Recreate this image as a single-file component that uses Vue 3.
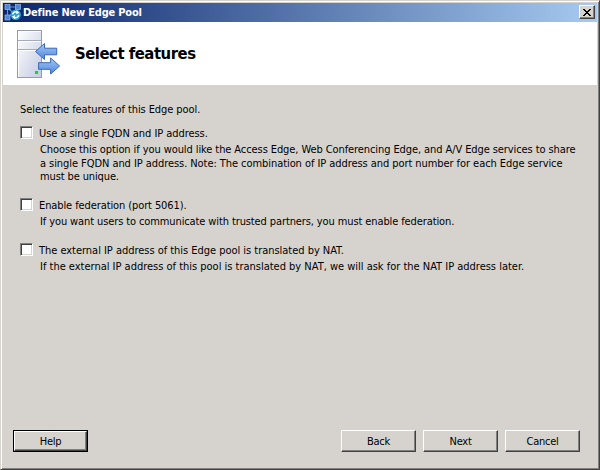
<script setup>
import { ref } from 'vue'

const options = ref([
  {
    id: 'single',
    label: 'Use a single FQDN and IP address.',
    tracking: -0.06,
    lines: [
      { text: 'Choose this option if you would like the Access Edge, Web Conferencing Edge, and A/V Edge services to share', tracking: -0.09 },
      { text: 'a single FQDN and IP address. Note: The combination of IP address and port number for each Edge service', tracking: -0.065 },
      { text: 'must be unique.', tracking: -0.12 },
    ],
    checked: false,
  },
  {
    id: 'federation',
    label: 'Enable federation (port 5061).',
    tracking: -0.1,
    lines: [
      { text: 'If you want users to communicate with trusted partners, you must enable federation.', tracking: -0.11 },
    ],
    checked: false,
  },
  {
    id: 'nat',
    label: 'The external IP address of this Edge pool is translated by NAT.',
    tracking: -0.03,
    lines: [
      { text: 'If the external IP address of this pool is translated by NAT, we will ask for the NAT IP address later.', tracking: -0.01 },
    ],
    checked: false,
  },
])
</script>

<template>
  <div class="window">
    <header class="titlebar">
      <svg class="app-icon" width="17" height="17" viewBox="0 0 17 17">
        <path d="M3.5 3L14 3M3.5 3L9 9L3.5 13.5M14 3L9 9M3.5 3V13" stroke="#5f92d6" stroke-width="1.2" fill="none" />
        <g fill="#4f86d0" stroke="#8fbcf0" stroke-width=".7">
          <rect x="1" y=".6" width="5" height="5" />
          <rect x="11.4" y=".6" width="5" height="5" />
          <rect x="1" y="11" width="5" height="5" />
        </g>
        <circle cx="11.7" cy="10.8" r="5.2" fill="#22a3dc" />
        <path d="M8.7 10.4A3.1 3.1 0 0 1 13.4 8.2M14.7 11A3.1 3.1 0 0 1 10 13.2" stroke="#fff" stroke-width="1.6" fill="none" />
        <path d="M12.5 6.2l3 2.5-3.2 1.6zM10.9 15.2l-3-2.5 3.2-1.6z" fill="#fff" />
      </svg>
      <span class="title">Define New Edge Pool</span>
      <button class="close" aria-label="Close">
        <svg width="8" height="7" viewBox="0 0 8 7" shape-rendering="crispEdges">
          <path d="M0 0h2v1h1v1h2v-1h1v-1h2v1h-1v1h-1v1h-1v1h1v1h1v1h1v1h-2v-1h-1v-1h-2v1h-1v1h-2v-1h1v-1h1v-1h1v-1h-1v-1h-1v-1h-1z" fill="#000" />
        </svg>
      </button>
    </header>

    <section class="banner">
      <svg class="server" width="46" height="50" viewBox="0 0 46 50">
        <defs>
          <linearGradient id="body" x1="0" y1="0" x2="1" y2="1">
            <stop offset="0" stop-color="#fff" />
            <stop offset="1" stop-color="#c4cbe2" />
          </linearGradient>
          <linearGradient id="arrow" x1="0" y1="0" x2="0" y2="1">
            <stop offset="0" stop-color="#a3c8fa" />
            <stop offset="1" stop-color="#4f86da" />
          </linearGradient>
        </defs>
        <rect x="1.5" y="1.5" width="24" height="47" fill="url(#body)" stroke="#949cab" />
        <path d="M2.5 47.5V2.5H24.5" fill="none" stroke="#fff" />
        <path d="M2 11.5H25M2 20.5H25" stroke="#a3aabb" />
        <path d="M2 12.5H25M2 21.5H25" stroke="#fff" />
        <rect x="19" y="42" width="3" height="3" fill="#10d826" />
        <path d="M19.5 22.5L28.5 14.5V19.2H40.7V25.8H28.5V30.5Z" fill="url(#arrow)" stroke="#3b68b4" />
        <path d="M43.6 37L34.6 29V33.7H22.6V40.3H34.6V45Z" fill="url(#arrow)" stroke="#3b68b4" />
      </svg>
      <h1>Select features</h1>
    </section>

    <main class="content">
      <p class="intro">Select the features of this Edge pool.</p>
      <div v-for="o in options" :key="o.id" class="option">
        <label class="row">
          <input v-model="o.checked" type="checkbox" class="box" />
          <span class="label" :style="{ letterSpacing: o.tracking + 'px' }">{{ o.label }}</span>
        </label>
        <div class="desc">
          <div v-for="line in o.lines" :key="line.text" :style="{ letterSpacing: line.tracking + 'px' }">{{ line.text }}</div>
        </div>
      </div>
    </main>

    <footer class="footer">
      <div class="default-frame"><button class="btn">Help</button></div>
      <span class="spacer"></span>
      <button class="btn">Back</button>
      <button class="btn">Next</button>
      <button class="btn">Cancel</button>
    </footer>
  </div>
</template>

<style>
body {
  margin: 0;
  background: #d6d3ce;
}
</style>

<style scoped>
.window {
  box-sizing: border-box;
  width: 600px;
  height: 470px;
  display: flex;
  flex-direction: column;
  background: #d6d3ce;
  border: 1px solid #d6d3ce;
  border-right: 1px solid #404040;
  border-bottom: 1px solid #404040;
  box-shadow: inset 1px 1px #fff, inset -1px -1px #808080;
  padding: 2px;
  color: #000;
  font-family: 'DejaVu Sans Condensed', 'DejaVu Sans', sans-serif;
  font-stretch: condensed;
  font-size: 11px;
}
.titlebar {
  box-sizing: border-box;
  flex: none;
  height: 19px;
  display: flex;
  align-items: center;
  background: linear-gradient(90deg, #0a246a, #a6caf0);
  padding: 0 2px 1px 1px;
}
.app-icon {
  margin-right: 2px;
}
.title {
  flex: 1;
  color: #fff;
  font-weight: bold;
  letter-spacing: -0.2px;
}
.close {
  box-sizing: border-box;
  width: 16px;
  height: 14px;
  padding: 0;
  display: flex;
  align-items: center;
  justify-content: center;
  background: #d6d3ce;
  border: 1px solid;
  border-color: #fff #404040 #404040 #fff;
  box-shadow: inset -1px -1px #808080;
}
.banner {
  box-sizing: border-box;
  flex: none;
  height: 63px;
  display: flex;
  align-items: center;
  background: #fff;
  padding: 1px 0 0 13px;
}
.server {
  flex: none;
  margin-right: 13px;
}
h1 {
  margin: 0 0 1px;
  font-size: 16.5px;
  font-weight: bold;
  letter-spacing: -0.46px;
}
.content {
  flex: 1;
  padding: 18px 17px 0;
  line-height: 14px;
  white-space: nowrap;
}
.intro {
  margin: 0 0 8px;
  letter-spacing: -0.08px;
}
.option {
  margin-bottom: 13.5px;
}
.row {
  display: flex;
  align-items: center;
  height: 15px;
  gap: 6px;
}
.label {
  padding-top: 2px;
}
.box {
  appearance: none;
  box-sizing: border-box;
  width: 13px;
  height: 13px;
  margin: 0;
  background: #fff;
  border: 1px solid;
  border-color: #808080 #fff #fff #808080;
  box-shadow: inset 1px 1px #404040, inset -1px -1px #d6d3ce;
}
.desc {
  padding: 3px 0 0 20px;
  line-height: 13.5px;
}
.footer {
  flex: none;
  display: flex;
  align-items: center;
  gap: 7px;
  padding: 0 17px 15px 10px;
}
.spacer {
  flex: 1;
}
.default-frame {
  border: 1px solid #000;
}
.btn {
  box-sizing: border-box;
  width: 75px;
  height: 22px;
  padding: 1px 0 0;
  font: inherit;
  letter-spacing: -0.25px;
  color: #000;
  background: #d6d3ce;
  border: 1px solid;
  border-color: #fff #404040 #404040 #fff;
  box-shadow: inset -1px -1px #808080;
}
.default-frame .btn {
  display: block;
  width: 73px;
  height: 20px;
}
</style>
